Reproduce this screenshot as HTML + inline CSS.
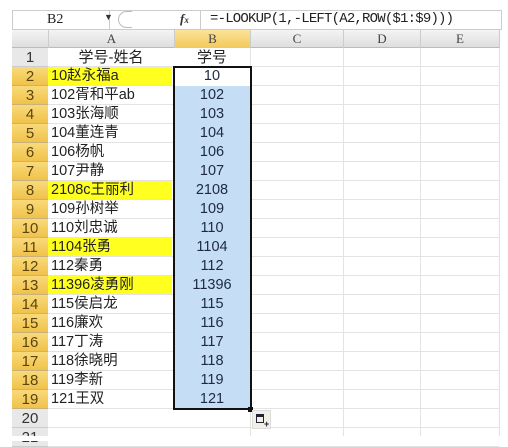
<!DOCTYPE html><html><head><meta charset="utf-8"><style>
*{margin:0;padding:0;box-sizing:border-box}
body{width:508px;height:441px;background:#fff;position:relative;overflow:hidden;font-family:"Liberation Sans","Noto Sans CJK SC",sans-serif}
.a{position:absolute}
.rh{position:absolute;left:12px;width:36px;height:19px;text-align:center;font-size:15px;line-height:19px;color:#333;border-bottom:1px solid #c9b27a;font-family:"Liberation Sans",sans-serif}
.g{background:linear-gradient(#f9da7a,#f0c24a);color:#5a4410}
.n{background:#e8e8e8;border-bottom:1px solid #ccc}
.ca{position:absolute;left:48px;width:126px;height:19px;font-size:14.5px;line-height:19px;padding-left:3px;color:#222;border-bottom:1px solid #e3e3e3}
.cb{position:absolute;left:174px;width:76px;height:19px;font-size:14.5px;line-height:19px;text-align:center;color:#1c2a44;background:#c5ddf5;font-family:"Liberation Sans",sans-serif}
.y{background:#ffff20;width:124px}
.hl{position:absolute;top:48px;height:390px;border-left:1px solid #e3e3e3}
</style></head><body>
<div class="a" style="left:12px;top:10px;width:490px;height:20px;border:1px solid #ccc;background:#fff"></div>
<div class="a" style="left:12px;top:10px;width:98px;height:20px;border-right:1px solid #ccc;font-family:'Liberation Serif',serif;font-size:14px;line-height:19px;padding-left:35px;color:#222">B2</div>
<div class="a" style="left:104px;top:12px;font-size:9px;color:#333">▼</div>
<div class="a" style="left:118px;top:11px;width:14px;height:17px;border:1px solid #bbb;border-right:none;border-radius:9px 0 0 9px"></div>
<div class="a" style="left:180px;top:11px;font-family:'Liberation Serif',serif;font-style:italic;font-weight:bold;font-size:13px;color:#333">f<span style="font-size:9px">x</span></div>
<div class="a" style="left:200px;top:10px;height:20px;border-left:1px solid #ccc"></div>
<div class="a" style="left:210px;top:11px;font-family:'Liberation Mono',monospace;font-size:14px;color:#222;letter-spacing:-0.8px">=-LOOKUP(1,-LEFT(A2,ROW($1:$9)))</div>
<div class="a" style="left:12px;top:30px;width:488px;height:18px;background:linear-gradient(#f4f4f4,#dedede);border-bottom:1px solid #bbb"></div>
<div class="a" style="left:174px;top:30px;width:76px;height:18px;background:linear-gradient(#fbe39a,#f2c95a)"></div>
<div class="a" style="top:30px;left:48px;width:126px;text-align:center;font-size:13px;line-height:18px;color:#444;font-family:'Liberation Serif',serif;border-left:1px solid #ccc">A</div>
<div class="a" style="top:30px;left:174px;width:76px;text-align:center;font-size:13px;line-height:18px;color:#444;font-family:'Liberation Serif',serif;border-left:1px solid #ccc">B</div>
<div class="a" style="top:30px;left:250px;width:93px;text-align:center;font-size:13px;line-height:18px;color:#444;font-family:'Liberation Serif',serif;border-left:1px solid #ccc">C</div>
<div class="a" style="top:30px;left:343px;width:77px;text-align:center;font-size:13px;line-height:18px;color:#444;font-family:'Liberation Serif',serif;border-left:1px solid #ccc">D</div>
<div class="a" style="top:30px;left:420px;width:80px;text-align:center;font-size:13px;line-height:18px;color:#444;font-family:'Liberation Serif',serif;border-left:1px solid #ccc;border-right:1px solid #ccc">E</div>
<div class="hl" style="left:250px"></div><div class="hl" style="left:343px"></div><div class="hl" style="left:420px"></div><div class="hl" style="left:499px"></div>
<div id="g"></div>
<script>
var A=["学号-姓名","10赵永福a","102胥和平ab","103张海顺","104董连青","106杨帆","107尹静","2108c王丽利","109孙树举","110刘忠诚","1104张勇","112秦勇","11396凌勇刚","115侯启龙","116廉欢","117丁涛","118徐晓明","119李新","121王双"];
var B=["学号","10","102","103","104","106","107","2108","109","110","1104","112","11396","115","116","117","118","119","121"];
var Y=[2,8,11,13],h="";
for(var i=1;i<=21;i++){var t=48+19*(i-1);
h+='<div class="rh '+(i>=2&&i<=19?'g':'n')+'" style="top:'+t+'px">'+i+'</div>';
h+='<div style="position:absolute;left:48px;width:451px;top:'+(t+18)+'px;border-top:1px solid #e3e3e3"></div>';
if(i<=19){h+='<div class="ca'+(Y.indexOf(i)>=0?' y':'')+'" style="top:'+t+'px;'+(i==1?'text-align:center;padding:0;font-size:15px':'')+'">'+A[i-1]+'</div>';
h+='<div class="cb" style="top:'+t+'px;'+(i<=2?'background:#fff;':'')+(i==1?'font-family:Liberation Sans,Noto Sans CJK SC,sans-serif;font-size:15px;color:#222':'')+'">'+B[i-1]+'</div>';}}
document.getElementById('g').innerHTML=h;
</script>
<div class="a" style="left:173px;top:66px;width:79px;height:344px;border:2.5px solid #111"></div>
<div class="a" style="left:248px;top:407px;width:5px;height:5px;background:#111"></div>
<div class="a" style="left:252px;top:410px;width:19px;height:19px;background:#f2f0e6;border:1px solid #ddd"></div>
<div class="a" style="left:256px;top:414px;width:8px;height:9px;border:1.5px solid #223;border-top:3px solid #223"></div>
<div class="a" style="left:264px;top:420px;font-size:9px;line-height:9px;font-weight:bold;color:#223">+</div>
<div class="a" style="left:0;top:436px;width:508px;height:5px;background:#fff"></div>
</body></html>
